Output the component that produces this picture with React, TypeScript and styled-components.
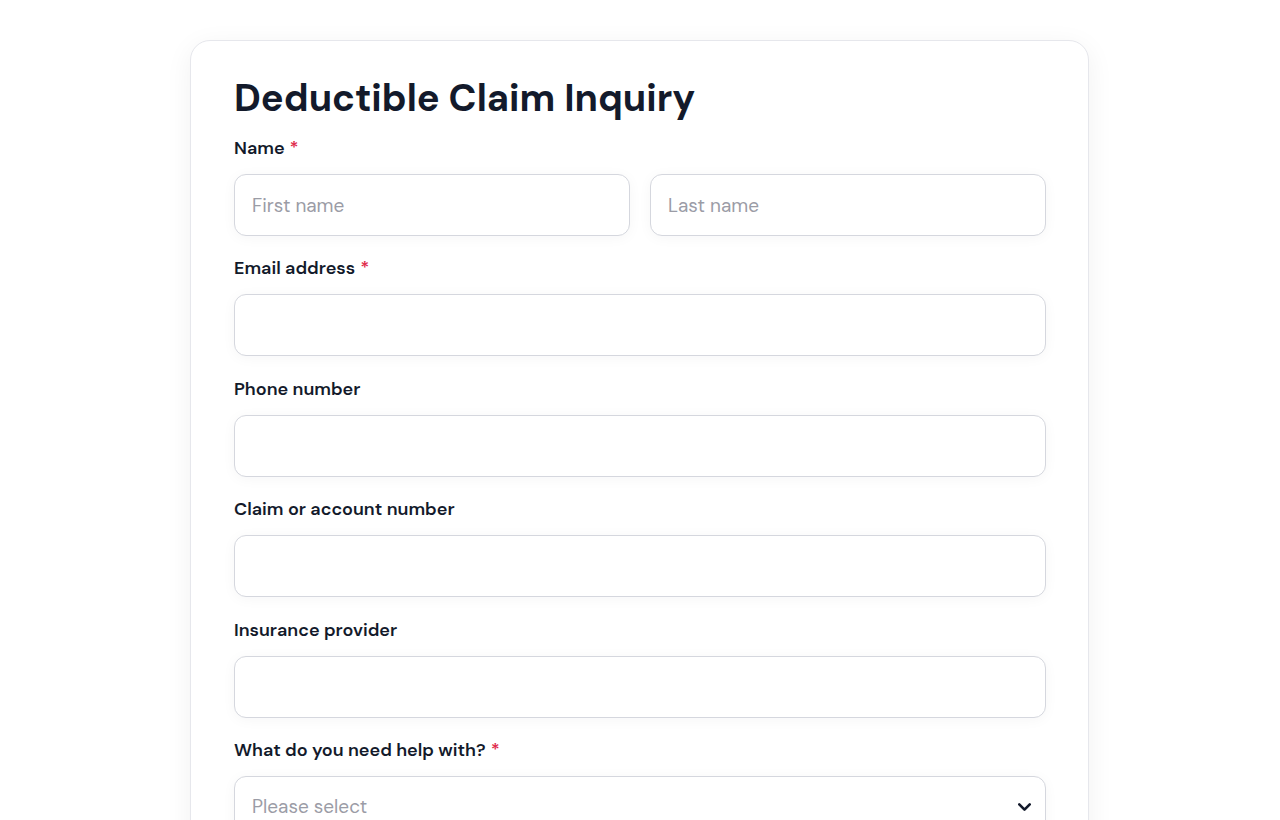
import styled, { createGlobalStyle } from "styled-components"
import { ChevronDown } from "lucide-react"

const GlobalStyle = createGlobalStyle`
  html, body {
    margin: 0;
    padding: 0;
    background: #ffffff;
    overflow: hidden;
  }
  body {
    font-family: "DM Sans", Inter, "Noto Sans", sans-serif;
    color: #131a2b;
  }
  * { box-sizing: border-box; }
`

const Page = styled.main`
  padding: 40px 1px 0 0;
  display: flex;
  justify-content: center;
`

const Card = styled.form`
  width: 899px;
  min-height: 900px;
  background: #ffffff;
  border: 1px solid #e6e7ec;
  border-radius: 20px;
  box-shadow: 0 6px 28px rgba(17, 24, 39, 0.06);
  padding: 34px 42px 40px 43px;
  display: flex;
  flex-direction: column;
`

const Title = styled.h1`
  margin: 0 0 15px;
  font-size: 38px;
  line-height: 46px;
  font-weight: 700;
  color: #131a2b;
`

const Field = styled.div`
  display: flex;
  flex-direction: column;
  & + & {
    margin-top: 20.4px;
  }
`

const Label = styled.label`
  font-size: 18px;
  line-height: 24px;
  font-weight: 600;
  color: #131a2b;
  margin-bottom: 14px;
`

const Required = styled.span`
  color: #e0294a;
  margin-left: 5px;
`

const Row = styled.div`
  display: grid;
  grid-template-columns: 1fr 1fr;
  gap: 20px;
`

const Input = styled.input`
  width: 100%;
  height: 62px;
  border: 1px solid #d5d7de;
  border-radius: 12px;
  padding: 0 17px;
  font-family: inherit;
  font-size: 19px;
  color: #131a2b;
  background: #ffffff;
  box-shadow: 0 2px 14px rgba(17, 24, 39, 0.04);
  outline: none;
  &::placeholder {
    color: #9b9ca6;
  }
`

const SelectWrap = styled.div`
  position: relative;
`

const Select = styled.select`
  appearance: none;
  width: 100%;
  height: 62px;
  border: 1px solid #d5d7de;
  border-radius: 12px;
  padding: 0 48px 0 17px;
  font-family: inherit;
  font-size: 19px;
  color: #9b9ca6;
  background: #ffffff;
  box-shadow: 0 2px 14px rgba(17, 24, 39, 0.04);
  outline: none;
`

const Chevron = styled.span`
  position: absolute;
  right: 11px;
  top: 50%;
  transform: translateY(-50%);
  display: flex;
  color: #131a2b;
  pointer-events: none;
`

type FieldProps = { label: string; required?: boolean; children: React.ReactNode }

function FormField({ label, required, children }: FieldProps) {
  return (
    <Field>
      <Label>
        {label}
        {required && <Required>*</Required>}
      </Label>
      {children}
    </Field>
  )
}

export default function App() {
  return (
    <>
      <GlobalStyle />
      <Page>
        <Card onSubmit={e => e.preventDefault()}>
          <Title>Deductible Claim Inquiry</Title>
          <FormField label="Name" required>
            <Row>
              <Input placeholder="First name" />
              <Input placeholder="Last name" />
            </Row>
          </FormField>
          <FormField label="Email address" required>
            <Input type="email" />
          </FormField>
          <FormField label="Phone number">
            <Input type="tel" />
          </FormField>
          <FormField label="Claim or account number">
            <Input />
          </FormField>
          <FormField label="Insurance provider">
            <Input />
          </FormField>
          <FormField label="What do you need help with?" required>
            <SelectWrap>
              <Select defaultValue="">
                <option value="" disabled>Please select</option>
                <option value="status">Claim status</option>
                <option value="deductible">Deductible amount</option>
                <option value="other">Other</option>
              </Select>
              <Chevron>
                <ChevronDown size={21} strokeWidth={3} />
              </Chevron>
            </SelectWrap>
          </FormField>
        </Card>
      </Page>
    </>
  )
}
